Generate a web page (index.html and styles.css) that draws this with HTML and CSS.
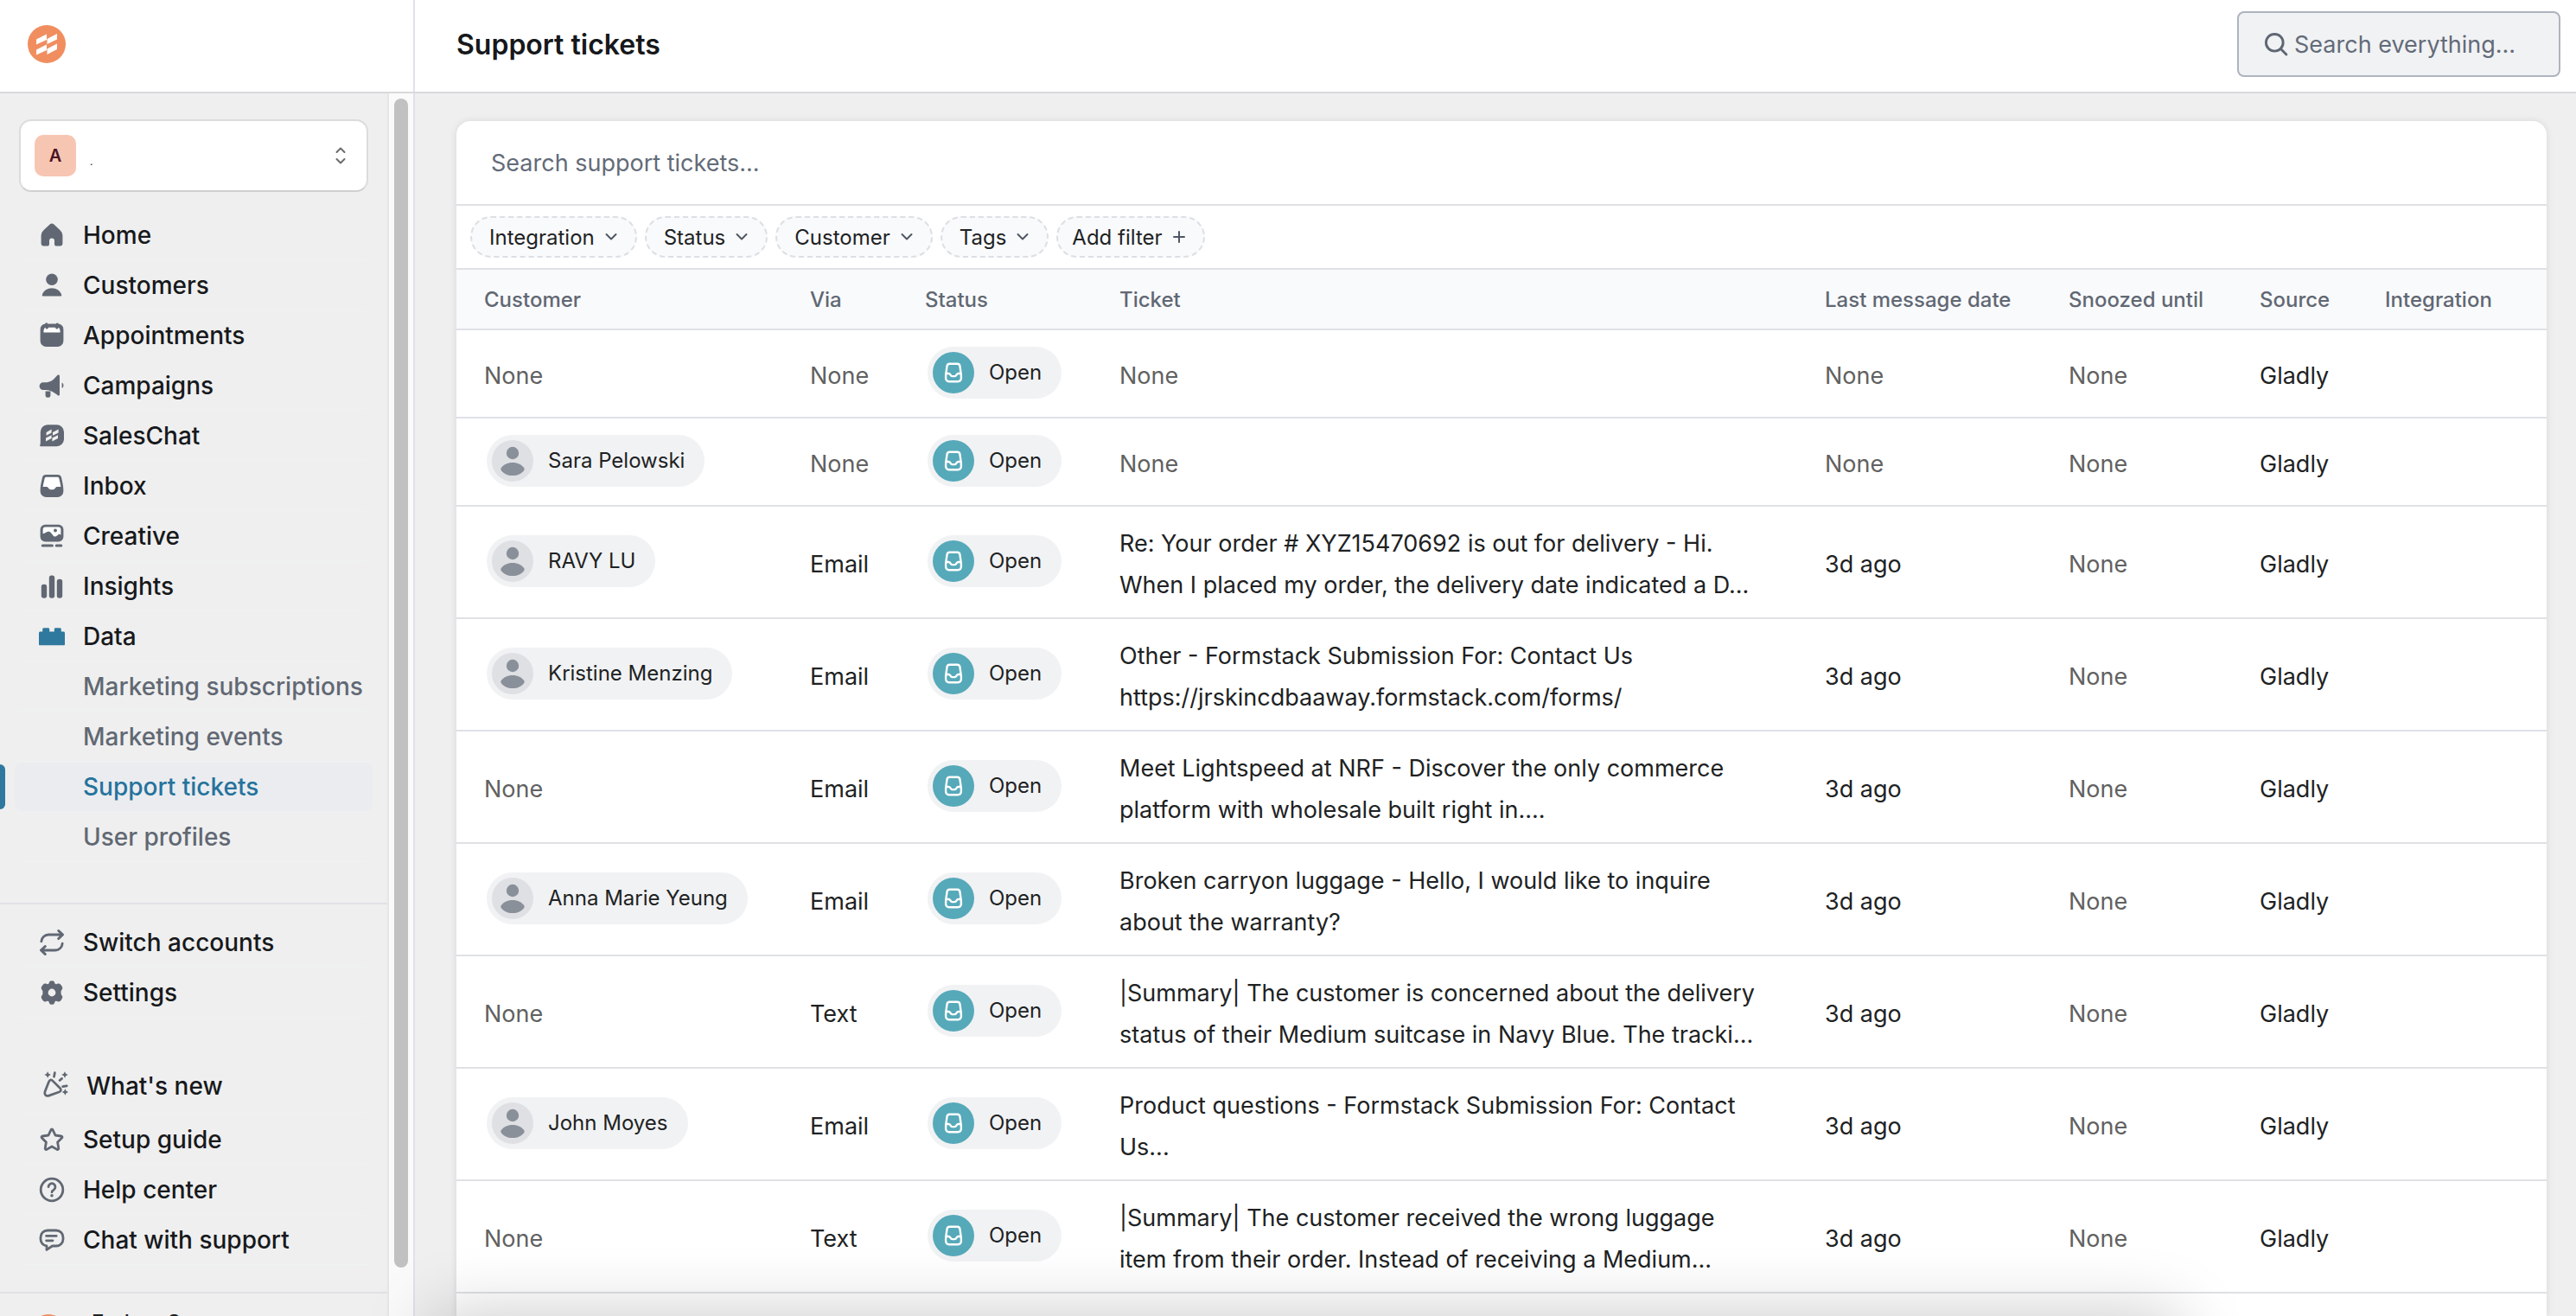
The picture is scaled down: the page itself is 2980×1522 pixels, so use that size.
FILE: index.html
```html
<!DOCTYPE html>
<html lang="en">
<head>
    <meta charset="UTF-8">
    <meta name="viewport" content="width=device-width, initial-scale=1.0">
    <title>Support tickets</title>
    <link rel="stylesheet" href="styles.css">
</head>
<body>
    <!-- icon sprite -->
    <svg class="sprite" aria-hidden="true">
        <symbol id="i-home" viewBox="0 0 20 20"><path d="M8.800 3.800a1.800 1.800 0 0 1 2.400 0l3.700 3.400a4 4 0 0 1 1.300 2.900v4.700a1.500 1.500 0 0 1-1.500 1.500h-1.900a1.300 1.300 0 0 1-1.300-1.300v-1.800a1.500 1.500 0 0 0-3 0v1.800a1.300 1.300 0 0 1-1.300 1.300H5.300a1.500 1.500 0 0 1-1.500-1.500v-4.700a4 4 0 0 1 1.300-2.900z"/></symbol>
        <symbol id="i-user" viewBox="0 0 20 20"><circle cx="10" cy="6.6" r="3.400"/><path d="M4.400 15.500c.7-2.500 3-3.900 5.600-3.900s4.900 1.400 5.600 3.900c.1.500-.2.800-.7.800H5.100c-.5 0-.8-.3-.7-.8z"/></symbol>
        <symbol id="i-avatar" viewBox="0 0 48 48"><circle cx="24" cy="15" r="7.200"/><path d="M24 26c6 0 10.500 2.600 13 5.800 1 1.300.9 2.600-.1 3.700C34 39 30 41 24 41s-10-2-12.900-5.500c-1-1.100-1.100-2.400-.1-3.700C13.500 28.600 18 26 24 26z"/></symbol>
        <symbol id="i-calendar" viewBox="0 0 20 20"><path d="M6.800 2.600a.8.800 0 0 1 .8.700h4.800a.8.800 0 0 1 1.500 0 3.400 3.400 0 0 1 2.800 3.300v6.500a3.400 3.400 0 0 1-3.400 3.400H6.700a3.400 3.400 0 0 1-3.400-3.400V6.600a3.400 3.400 0 0 1 2.800-3.300.8.800 0 0 1 .7-.7z"/><path fill="#fff" d="M5.200 8.300c0-1.500.2-2.400 1-2.900.2.600.5.900.9.900s.8-.4.900-.9h4c.1.500.5.900.9.900s.7-.3.900-.9c.8.500 1 1.400 1 2.900z"/></symbol>
        <symbol id="i-megaphone" viewBox="0 0 20 20"><path d="M13.300 3.900c.6-.3 1.200 0 1.200.6v10.600c0 .6-.6.900-1.100.5-2.400-1.900-4-2.900-6.900-3.100H5a2.200 2.200 0 0 1 0-4.400h2.100c2.700-.3 4.300-2 6.200-4.200z"/><path d="M6.300 13.300h2.900v2.400a1.200 1.200 0 0 1-1.200 1.200h-.5a1.200 1.200 0 0 1-1.200-1.200zM15.800 8.200a1.900 1.900 0 0 1 0 3.300z"/></symbol>
        <symbol id="i-saleschat" viewBox="0 0 20 20"><path d="M7.400 3.600h5.400A4.200 4.200 0 0 1 17 7.800v4.100a4.200 4.200 0 0 1-4.200 4.200H3.500c-.5 0-.7-.5-.4-.8.300-.3.300-.6.300-1V7.800a4.200 4.200 0 0 1 4-4.200z"/><path fill="#f0f0f0" d="M6.800 8l3-1.700v1.900l-3 1.700zM10.500 8l3.300-1.700v1.900l-3.300 1.700zM6.500 11.300l3.300-1.700v1.900l-3.300 1.700zM10.200 11.300l3.300-1.700v1.900l-3.300 1.700z"/></symbol>
        <symbol id="i-inbox" viewBox="0 0 20 20"><path d="M6.700 3.500h6.600a2.300 2.300 0 0 1 2.300 2c.6 3 1.100 4.500 1.100 7.500a3.500 3.500 0 0 1-3.500 3.500H6.800A3.500 3.500 0 0 1 3.300 13c0-3 .5-4.500 1.100-7.500a2.300 2.300 0 0 1 2.300-2z"/><path fill="#fff" d="M6.900 4.900h6.200c.6 0 1 .3 1.100.8.400 1.900.8 3.300 1 4.800h-2c-.6 0-.9.300-1.200.7-.5.700-1 .9-2 .9s-1.500-.2-2-.9c-.3-.4-.6-.7-1.200-.7h-2c.2-1.500.6-2.900 1-4.800.1-.5.5-.8 1.100-.8z"/></symbol>
        <symbol id="i-creative" viewBox="0 0 20 20"><rect x="3.300" y="3.400" width="13.400" height="9.800" rx="2.800"/><path fill="#fff" d="M4.800 8.600V6.300c0-1 .5-1.500 1.500-1.500h7.400c1 0 1.500.5 1.500 1.500v3.100c-.5-.6-.8-.7-1.300-.4-.6.400-1.200 1.300-2 1.300-1.300 0-1.900-2.200-3.200-2.800-1.300-.5-2.300.9-3.900 1.100z"/><circle cx="12" cy="6.800" r="1"/><path d="M4.600 14.800h5.600a.7.700 0 0 1 0 1.500H4.600a.7.700 0 0 1 0-1.500zM12.600 14.800h2.800a.7.700 0 0 1 0 1.500h-2.800a.7.700 0 0 1 0-1.500z"/></symbol>
        <symbol id="i-bars" viewBox="0 0 20 20"><rect x="3.900" y="8.900" width="3.200" height="8" rx="1.400"/><rect x="8.400" y="3.800" width="3.200" height="13.100" rx="1.400"/><rect x="12.900" y="5.900" width="3.200" height="11" rx="1.400"/></symbol>
        <symbol id="i-data" viewBox="0 0 20 20"><path d="M2.500 8.100c0-.5.300-.8.800-.8h1.300V5.900c0-.5.300-.8.800-.8h2.400c.5 0 .8.300.8.800v1.400h2.800V5.900c0-.5.300-.8.800-.8h2.400c.5 0 .8.300.8.800v1.400h1.300c.5 0 .8.300.8.800v6.500c0 .3-.2.500-.5.500H3c-.3 0-.5-.2-.5-.5z"/></symbol>
        <symbol id="i-switch" viewBox="0 0 20 20"><g fill="none" stroke="currentColor" stroke-width="1.400" stroke-linecap="round" stroke-linejoin="round"><path d="M3.900 9.400a4.200 4.200 0 0 1 4.200-3.900h8.200M13.800 3.200l2.500 2.300-2.500 2.300M16.100 10.600a4.200 4.200 0 0 1-4.200 3.900H3.700M6.200 12.200l-2.500 2.300 2.500 2.300"/></g></symbol>
        <symbol id="i-gear" viewBox="0 0 20 20"><path fill-rule="evenodd" d="M8.400 4.300c.2-.8.700-1.200 1.600-1.200s1.400.4 1.600 1.200c.1.700.7 1 1.300.7.900-.3 1.600-.3 2.200.4.900 1 1.300 1.900.9 2.600-.3.500-.7.800-.7 1.200v1.600c0 .4.400.7.700 1.200.4.700 0 1.600-.9 2.600-.6.700-1.300.7-2.200.4-.6-.3-1.200 0-1.300.7-.2.800-.7 1.200-1.600 1.200s-1.400-.4-1.600-1.200c-.1-.7-.7-1-1.300-.7-.9.300-1.600.3-2.200-.4-.9-1-1.300-1.900-.9-2.600.3-.5.700-.8.700-1.200V9.200c0-.4-.4-.7-.7-1.200-.4-.7 0-1.600.9-2.600.6-.7 1.300-.7 2.200-.4.600.3 1.200 0 1.300-.7zM10 12.200a2.200 2.200 0 1 0 0-4.400 2.200 2.200 0 0 0 0 4.400z"/></symbol>
        <symbol id="i-party" viewBox="0.500 1.500 19 19"><g fill="none" stroke="currentColor" stroke-width="1.300" stroke-linecap="round" stroke-linejoin="round"><path d="M6.400 8.700c.5-1.200 1.300-1.400 2.200-.5l3.900 3.900c.9.900.7 1.700-.5 2.200l-5.500 2c-1.600.5-2.700-.6-2.200-2.200zM9.700 3.700l-.4 2.200M12.400 7.900l1.200-1M14.100 11.300l2.200-.4"/></g><path d="M5.800 3l.6 1.200 1.200.6-1.200.6-.6 1.200-.6-1.200L4 4.800l1.200-.6zM15.200 3l.6 1.200 1.200.6-1.200.6-.6 1.200-.6-1.200-1.200-.6 1.200-.6zM15.400 12.500l.6 1.200 1.200.6-1.200.6-.6 1.200-.6-1.200-1.200-.6 1.200-.6z"/></symbol>
        <symbol id="i-star" viewBox="0 0 20 20"><path fill="none" stroke="currentColor" stroke-width="1.400" stroke-linejoin="round" d="M9.500 4.300c.2-.5.800-.5 1 0l1.500 3.200 3.500.5c.5.100.7.700.3 1l-2.500 2.500.6 3.500c.1.500-.4.900-.9.700L10 14l-3 1.700c-.5.200-1-.2-.9-.7l.6-3.500L4.200 9c-.4-.3-.2-.9.300-1L8 7.500z"/></symbol>
        <symbol id="i-help" viewBox="0 0 20 20"><g fill="none" stroke="currentColor" stroke-width="1.400" stroke-linecap="round"><circle cx="10" cy="10" r="6.400"/><path d="M8 8.300a2 2 0 1 1 3 1.800c-.6.300-1 .6-1 1.300"/></g><circle cx="10" cy="13.400" r=".9"/></symbol>
        <symbol id="i-chat" viewBox="0 0 20 20"><g fill="none" stroke="currentColor" stroke-width="1.400" stroke-linecap="round" stroke-linejoin="round"><path d="M7.500 4.500h5a4 4 0 0 1 4 4v1a4 4 0 0 1-4 4h-2.200L7 15.700v-2.200a3.900 3.900 0 0 1-3.500-4v-1a4 4 0 0 1 4-4zM6.800 7.700h5.800M6.800 10.400h3.700"/></g></symbol>
        <symbol id="i-search" viewBox="0 0 20 20"><g fill="none" stroke="currentColor" stroke-width="1.700" stroke-linecap="round"><circle cx="9" cy="9" r="5.800"/><path d="M13.200 13.200l3.800 3.800"/></g></symbol>
        <symbol id="i-down" viewBox="0 0 16 16"><path fill="none" stroke="currentColor" stroke-width="2" stroke-linecap="round" stroke-linejoin="round" d="M2.500 5l5.500 5.500L13.500 5"/></symbol>
        <symbol id="i-plus" viewBox="0 0 16 16"><path fill="none" stroke="currentColor" stroke-width="2" stroke-linecap="round" d="M8 2v12M2 8h12"/></symbol>
        <symbol id="i-open" viewBox="0 0 20 20"><path fill="none" stroke="currentColor" stroke-width="2" stroke-linejoin="round" d="M6.200 1.500h7.600c1.400 0 2.200.8 2.400 2.200l1 7c.1.900.2 1.700.2 2.500v2.100c0 2-1.200 3.200-3.200 3.200H5.800c-2 0-3.200-1.200-3.200-3.200v-2.100c0-.8.100-1.600.2-2.500l1-7c.2-1.400 1-2.200 2.400-2.200zM2.800 10.800h2.600c1.700 0 1.500 2.600 3.300 2.600h2.600c1.800 0 1.600-2.600 3.300-2.600h2.600"/></symbol>
        <symbol id="i-logo" viewBox="0 0 44 44"><circle cx="22" cy="22" r="22"/><path fill="#fff" d="M10 16.500l12-6v6.500l-12 5.500zM22.500 16L34 10v6.500L22.500 22zM10 28.500L22 22.500V29l-12 5.500zM22.500 27.500L34 21.500V28l-11.500 6z"/></symbol>
    </svg>

    <header class="topbar">
        <div class="brand">
            <svg class="logo"><use href="#i-logo"/></svg>
        </div>
        <div class="topbar-main">
            <h1>Support tickets</h1>
            <label class="global-search">
                <svg class="search-icon"><use href="#i-search"/></svg>
                <input type="text" placeholder="Search everything..." aria-label="Search everything">
            </label>
        </div>
    </header>

    <div class="layout">
        <aside class="sidebar">
            <div class="sidebar-content">
                <button class="account">
                    <span class="account-badge">A</span>
                    <span class="account-name">.</span>
                    <svg class="account-arrows" viewBox="0 0 12 20" fill="none" stroke="currentColor" stroke-width="2" stroke-linecap="round" stroke-linejoin="round"><path d="M1.500 6L6 1.500 10.500 6M1.500 14L6 18.500l4.500-4.500"/></svg>
                </button>
                <nav class="nav">
                    <a href="#"><svg><use href="#i-home"/></svg>Home</a>
                    <a href="#"><svg><use href="#i-user"/></svg>Customers</a>
                    <a href="#"><svg><use href="#i-calendar"/></svg>Appointments</a>
                    <a href="#"><svg><use href="#i-megaphone"/></svg>Campaigns</a>
                    <a href="#"><svg><use href="#i-saleschat"/></svg>SalesChat</a>
                    <a href="#"><svg><use href="#i-inbox"/></svg>Inbox</a>
                    <a href="#"><svg><use href="#i-creative"/></svg>Creative</a>
                    <a href="#"><svg><use href="#i-bars"/></svg>Insights</a>
                    <a href="#" class="open"><svg><use href="#i-data"/></svg>Data</a>
                    <a href="#" class="sub">Marketing subscriptions</a>
                    <a href="#" class="sub">Marketing events</a>
                    <a href="#" class="sub active">Support tickets</a>
                    <a href="#" class="sub">User profiles</a>
                </nav>
                <nav class="nav nav-settings">
                    <a href="#"><svg><use href="#i-switch"/></svg>Switch accounts</a>
                    <a href="#"><svg><use href="#i-gear"/></svg>Settings</a>
                </nav>
                <nav class="nav nav-help">
                    <a href="#" class="news"><svg><use href="#i-party"/></svg>What's new</a>
                    <a href="#"><svg><use href="#i-star"/></svg>Setup guide</a>
                    <a href="#"><svg><use href="#i-help"/></svg>Help center</a>
                    <a href="#"><svg><use href="#i-chat"/></svg>Chat with support</a>
                </nav>
                <div class="profile">
                    <span class="profile-avatar"></span>
                    <span>Endear Support</span>
                </div>
            </div>
            <div class="scrollbar"><div class="thumb"></div></div>
        </aside>

        <main class="main">
            <section class="card">
                <div class="card-search">
                    <input type="text" placeholder="Search support tickets..." aria-label="Search support tickets">
                </div>
                <div class="filters">
                    <button>Integration <svg><use href="#i-down"/></svg></button>
                    <button>Status <svg><use href="#i-down"/></svg></button>
                    <button>Customer <svg><use href="#i-down"/></svg></button>
                    <button>Tags <svg><use href="#i-down"/></svg></button>
                    <button class="add">Add filter <svg><use href="#i-plus"/></svg></button>
                </div>
                <table class="tickets">
                    <colgroup>
                        <col class="col-customer"><col class="col-via"><col class="col-status"><col>
                        <col class="col-date"><col class="col-snoozed"><col class="col-source"><col class="col-integration">
                    </colgroup>
                    <thead>
                        <tr>
                            <th>Customer</th>
                            <th>Via</th>
                            <th>Status</th>
                            <th>Ticket</th>
                            <th>Last message date</th>
                            <th>Snoozed until</th>
                            <th>Source</th>
                            <th>Integration</th>
                        </tr>
                    </thead>
                    <tbody>
                        <tr>
                            <td class="none">None</td>
                            <td class="none">None</td>
                            <td><span class="pill"><span class="dot"><svg><use href="#i-open"/></svg></span>Open</span></td>
                            <td class="none">None</td>
                            <td class="none">None</td>
                            <td class="none">None</td>
                            <td>Gladly</td>
                            <td></td>
                        </tr>
                        <tr>
                            <td><span class="pill"><span class="avatar"><svg><use href="#i-avatar"/></svg></span>Sara Pelowski</span></td>
                            <td class="none">None</td>
                            <td><span class="pill"><span class="dot"><svg><use href="#i-open"/></svg></span>Open</span></td>
                            <td class="none">None</td>
                            <td class="none">None</td>
                            <td class="none">None</td>
                            <td>Gladly</td>
                            <td></td>
                        </tr>
                        <tr>
                            <td><span class="pill"><span class="avatar"><svg><use href="#i-avatar"/></svg></span>RAVY LU</span></td>
                            <td>Email</td>
                            <td><span class="pill"><span class="dot"><svg><use href="#i-open"/></svg></span>Open</span></td>
                            <td>Re: Your order # XYZ15470692 is out for delivery - Hi.<br>When I placed my order, the delivery date indicated a D...</td>
                            <td>3d ago</td>
                            <td class="none">None</td>
                            <td>Gladly</td>
                            <td></td>
                        </tr>
                        <tr>
                            <td><span class="pill"><span class="avatar"><svg><use href="#i-avatar"/></svg></span>Kristine Menzing</span></td>
                            <td>Email</td>
                            <td><span class="pill"><span class="dot"><svg><use href="#i-open"/></svg></span>Open</span></td>
                            <td>Other - Formstack Submission For: Contact Us<br>https://jrskincdbaaway.formstack.com/forms/</td>
                            <td>3d ago</td>
                            <td class="none">None</td>
                            <td>Gladly</td>
                            <td></td>
                        </tr>
                        <tr>
                            <td class="none">None</td>
                            <td>Email</td>
                            <td><span class="pill"><span class="dot"><svg><use href="#i-open"/></svg></span>Open</span></td>
                            <td>Meet Lightspeed at NRF - Discover the only commerce<br>platform with wholesale built right in....</td>
                            <td>3d ago</td>
                            <td class="none">None</td>
                            <td>Gladly</td>
                            <td></td>
                        </tr>
                        <tr>
                            <td><span class="pill"><span class="avatar"><svg><use href="#i-avatar"/></svg></span>Anna Marie Yeung</span></td>
                            <td>Email</td>
                            <td><span class="pill"><span class="dot"><svg><use href="#i-open"/></svg></span>Open</span></td>
                            <td>Broken carryon luggage - Hello, I would like to inquire<br>about the warranty?</td>
                            <td>3d ago</td>
                            <td class="none">None</td>
                            <td>Gladly</td>
                            <td></td>
                        </tr>
                        <tr>
                            <td class="none">None</td>
                            <td>Text</td>
                            <td><span class="pill"><span class="dot"><svg><use href="#i-open"/></svg></span>Open</span></td>
                            <td>|Summary| The customer is concerned about the delivery<br>status of their Medium suitcase in Navy Blue. The tracki...</td>
                            <td>3d ago</td>
                            <td class="none">None</td>
                            <td>Gladly</td>
                            <td></td>
                        </tr>
                        <tr>
                            <td><span class="pill"><span class="avatar"><svg><use href="#i-avatar"/></svg></span>John Moyes</span></td>
                            <td>Email</td>
                            <td><span class="pill"><span class="dot"><svg><use href="#i-open"/></svg></span>Open</span></td>
                            <td>Product questions - Formstack Submission For: Contact<br>Us...</td>
                            <td>3d ago</td>
                            <td class="none">None</td>
                            <td>Gladly</td>
                            <td></td>
                        </tr>
                        <tr>
                            <td class="none">None</td>
                            <td>Text</td>
                            <td><span class="pill"><span class="dot"><svg><use href="#i-open"/></svg></span>Open</span></td>
                            <td>|Summary| The customer received the wrong luggage<br>item from their order. Instead of receiving a Medium...</td>
                            <td>3d ago</td>
                            <td class="none">None</td>
                            <td>Gladly</td>
                            <td></td>
                        </tr>
                    </tbody>
                </table>
            </section>
        </main>
    </div>
    <div class="bottom-shadow"></div>
</body>
</html>
```

FILE: styles.css
```css
* {
    box-sizing: border-box;
}

body {
    margin: 0;
    height: 100vh;
    display: flex;
    flex-direction: column;
    overflow: hidden;
    background: #efefef;
    color: #202223;
    font-family: Inter, "Liberation Sans", sans-serif;
    font-size: 27px;
    font-optical-sizing: none;
}

button,
input {
    font: inherit;
    color: inherit;
}

svg {
    display: block;
    flex: none;
    fill: currentColor;
}

.sprite {
    display: none;
}

/* top bar */
.topbar {
    display: flex;
    flex: none;
    height: 108px;
    background: #fff;
    border-bottom: 2px solid #d9d9dc;
}

.brand {
    width: 480px;
    padding: 29px 32px;
    border-right: 2px solid #e1e1e8;
}

.logo {
    width: 44px;
    height: 44px;
    color: #f08e60;
}

.topbar-main {
    flex: 1;
    display: flex;
    align-items: center;
    justify-content: space-between;
    padding: 0 18px 4px 48px;
}

h1 {
    margin: 0;
    font-size: 32px;
    font-weight: 600;
    color: #16181b;
}

.global-search {
    display: flex;
    align-items: center;
    gap: 4px;
    width: 374px;
    height: 76px;
    padding: 0 26px;
    background: #f1f2f4;
    border: 2px solid #aeb4bf;
    border-radius: 8px;
    color: #5f6673;
}

.search-icon {
    width: 34px;
    height: 34px;
}

.global-search input,
.card-search input {
    flex: 1;
    min-width: 0;
    padding: 0;
    border: none;
    outline: none;
    background: none;
}

input::placeholder {
    color: #636b78;
    opacity: 1;
}

.layout {
    flex: 1;
    display: flex;
    min-height: 0;
}

/* sidebar */
.sidebar {
    display: flex;
    flex: none;
    width: 480px;
    border-right: 2px solid #e1e1e8;
    overflow: hidden;
}

.sidebar-content {
    flex: 1;
    padding-top: 30px;
    border-right: 2px solid #e6e6e8;
}

.account {
    display: flex;
    align-items: center;
    width: 404px;
    height: 84px;
    margin: 0 0 22px 22px;
    padding: 0 24px 0 16px;
    background: #fff;
    border: 2px solid #dcdcdc;
    border-bottom-color: #d0d0d0;
    border-radius: 14px;
}

.account-badge {
    width: 48px;
    height: 48px;
    line-height: 48px;
    border-radius: 10px;
    background: #f7c6b2;
    color: #4a1522;
    font-size: 20px;
    font-weight: 600;
    text-align: center;
}

.account-name {
    flex: 1;
    margin: 12px 0 0 16px;
    font-size: 12px;
    text-align: left;
}

.account-arrows {
    width: 12px;
    height: 20px;
    color: #6b6b6b;
    fill: none;
}

.nav {
    display: flex;
    flex-direction: column;
    gap: 2px;
    padding: 0 17px;
    font-size: 28px;
}

.nav a {
    position: relative;
    display: flex;
    align-items: center;
    gap: 16px;
    height: 56px;
    padding-left: 23px;
    border-radius: 8px;
    box-shadow: 0 2px 0 -1px #eef2f1;
    color: #17191c;
    font-weight: 500;
    text-decoration: none;
}

.nav svg {
    width: 40px;
    height: 40px;
    color: #616873;
}

.nav .open svg {
    color: #2f789e;
}

.nav .sub {
    padding-left: 79px;
    color: #616873;
}

.nav .active {
    background: #ebecf0;
    color: #25739c;
}

/* marker on the window edge */
.nav .active::before {
    content: "";
    position: absolute;
    left: -17px;
    top: 2px;
    bottom: 2px;
    width: 6px;
    border-radius: 0 6px 6px 0;
    background: #2f789e;
}

.nav-settings {
    margin-top: 48px;
    padding-top: 16px;
    border-top: 2px solid #e1e1e8;
}

.nav-help {
    margin-top: 48px;
    padding-bottom: 32px;
    border-bottom: 2px solid #e1e1e8;
}

.nav .news {
    height: 64px;
    padding-left: 27px;
}

.profile {
    display: flex;
    gap: 28px;
    padding: 24px 34px 0;
    font-size: 24px;
    line-height: 20px;
    font-weight: 500;
}

.profile-avatar {
    width: 44px;
    height: 44px;
    border-radius: 50%;
    background: #f08e60;
}

.scrollbar {
    flex: none;
    width: 28px;
    padding: 6px 6px 0;
    background: #fafafa;
}

.thumb {
    width: 16px;
    height: 96%;
    border-radius: 8px;
    background: #c1c1c1;
}

/* tickets card */
.main {
    flex: 1;
    min-width: 0;
    padding: 32px 34px 0 48px;
}

.card {
    height: 100%;
    background: #fff;
    border-radius: 16px 16px 0 0;
    box-shadow: 0 0 8px rgba(0, 0, 0, .1);
    overflow: hidden;
}

.card-search {
    display: flex;
    height: 98px;
    padding: 0 40px;
    border-bottom: 2px solid #dfe1e6;
}

.filters {
    display: flex;
    gap: 9px;
    padding: 12px 16px;
    border-bottom: 2px solid #dfe1e6;
}

.filters button {
    display: flex;
    align-items: center;
    gap: 11px;
    height: 48px;
    padding: 0 20px;
    background: #f9fafc;
    border: 2px dashed #dcdfe4;
    border-radius: 24px;
    font-size: 24px;
    color: #202223;
}

.filters svg {
    width: 16px;
    height: 16px;
    color: #4f5763;
}

.filters .add {
    padding-left: 16px;
}

.tickets {
    width: 100%;
    table-layout: fixed;
    border-collapse: separate;
    border-spacing: 0;
    line-height: 48px;
}

.col-customer { width: 377px; }
.col-via { width: 133px; }
.col-status { width: 225px; }
.col-date { width: 282px; }
.col-snoozed { width: 221px; }
.col-source { width: 145px; }
.col-integration { width: 219px; }

th {
    height: 70px;
    padding: 2px 0 0 32px;
    background: #f9fafc;
    border-bottom: 2px solid #dfe1e6;
    color: #616873;
    font-size: 24px;
    font-weight: 500;
    text-align: left;
    white-space: nowrap;
}

td {
    padding: 19px 0 13px 32px;
    border-bottom: 2px solid #dfe1e6;
    white-space: nowrap;
}

.none {
    color: #616161;
}

.pill {
    display: flex;
    align-items: center;
    gap: 17px;
    width: fit-content;
    height: 60px;
    margin: 0 0 8px 3px;
    padding: 0 23px 0 6px;
    border-radius: 30px;
    background: #f1f2f4;
    font-size: 24px;
}

.dot,
.avatar {
    display: flex;
    align-items: center;
    justify-content: center;
    width: 48px;
    height: 48px;
    border-radius: 50%;
    background: #56a9b9;
    color: #fff;
}

.dot svg {
    width: 24px;
    height: 24px;
}

.avatar {
    background: #dfe0e4;
    color: #8a909a;
}

.avatar svg {
    width: 48px;
    height: 48px;
}

.bottom-shadow {
    position: fixed;
    top: 100%;
    left: 500px;
    right: 460px;
    height: 200px;
    box-shadow: 0 0 80px rgba(0, 0, 0, .22);
}
```
